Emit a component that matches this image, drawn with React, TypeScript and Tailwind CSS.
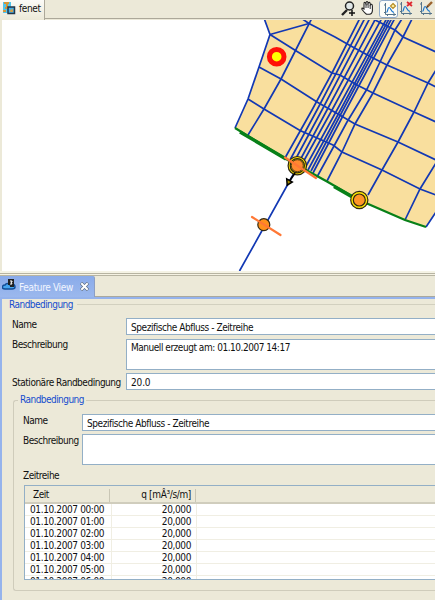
import type { ReactNode } from "react";

const rowLines = [
  "373,19 395,30 403,37 436,52",
  "270,34.5 309,23.5",
  "301,18 309,23.5 335,37 350,45.5 373,58 387,65 428,83 436,87",
  "270,34.5 295.5,50.5 332,73 340,75 357,85 373,93 414,112 436,122",
  "259,67 281,79 317,102 338,114 355,124 398,142 436,160",
  "248,99 264,109 300,130.5 333,145 342,152 382,170 420,189 436,195",
];
const columnLines = [
  "312,18 295.5,50.5 281,79 264,109 248,135",
  "436,70 428,83 414,112 398,142 382,170 368,195",
  "436,163 420,189 405,220",
  "412.5,18 403,37 387,65 373,93 355,124 342,152 327,181",
  "402.5,18 395,30 380,62 367,89 347,122 334,146 317,177",
];
const bundle = [
  "360,18 332,73 312,110 285,158",
  "365,18 317,110 290,160",
  "370,18 322,110 294,162",
  "376,18 327,110 298,164",
  "382,18 332,110 301,166",
  "387,18 337,110 305,168",
  "389.5,18 340.5,110 308,170",
  "392,18 343,110 311,171",
  "395,18 346,110 313,173",
];
const times = ["00:00", "01:00", "02:00", "03:00", "04:00", "05:00", "06:00"];

function FlowMap() {
  return (
    <svg className="ml-[2px] block h-[251px] w-[433px] bg-white" viewBox="2 20 433 251">
      <polygon points="264,19 270,34.5 259,67 248,99 235,128 286,158 327,181 359,200 405,220 426,227 436,213 436,19" fill="#f9df9e" />
      <g fill="none" stroke="#1238b4" strokeWidth="1.7">
        <polyline points="264,18 270,34.5 259,67 248,99 235,128" />
        {[...rowLines, ...columnLines].map((p) => <polyline key={p} points={p} />)}
        {bundle.map((p) => <polyline key={p} points={p} />)}
        <path d="M426 227l10-15M298 166L239.5 271" />
      </g>
      <g fill="none" stroke="#088018">
        <path d="M235 128L286 159L327 181.5L359 200L405 220L426 227" strokeWidth="2.3" />
        <path d="M240 132L286 159M334 186.5L355 198.5" strokeWidth="3.4" />
      </g>
      <circle cx="276.7" cy="56.7" r="7.3" fill="#ffff00" stroke="#ff1008" strokeWidth="5" />
      <g strokeWidth="1.2" stroke="#302810">
        <circle cx="297.3" cy="165.7" r="9.2" fill="#ffe800" />
        <circle cx="297.3" cy="165.7" r="7.1" fill="#ffe000" />
        <circle cx="297.3" cy="165.7" r="6" fill="#ff8a30" strokeWidth="0.8" />
        <circle cx="359.3" cy="200" r="8.6" fill="#ffe800" />
        <circle cx="359.3" cy="200" r="6" fill="#ff9528" />
        <circle cx="263.8" cy="224.7" r="6" fill="#ff901c" />
      </g>
      <path d="M285 157.5L316 178M252 217L280.5 235" stroke="#ff7836" strokeWidth="2.2" strokeLinecap="round" />
      <path d="M295 173L289.5 181" stroke="#000" strokeWidth="1.7" />
      <path d="M286.7 178.8L292.3 182L287.2 185.2Z" fill="#a58c00" stroke="#000" strokeWidth="1.5" />
    </svg>
  );
}

function ChartIcon({ children }: { children: ReactNode }) {
  return (
    <svg className="h-[14px] w-[14px] shrink-0" viewBox="0 0 14 14" fill="none">
      <path d="M2.5 1v11.5H13M1 3h2M1 10.5h2M4.5 12v2M11 11v3" stroke="#55748b" strokeWidth="1" />
      <path d="M3.5 10.5C5 10 4.5 5.5 6 5.5C7.8 5.5 7.5 9.5 11 10.5" stroke="#1976cf" strokeWidth="1.2" />
      {children}
    </svg>
  );
}

function Label({ className, children }: { className: string; children: ReactNode }) {
  return <span className={`block shrink-0 whitespace-nowrap ${className}`}>{children}</span>;
}

export default function App() {
  return (
    <main className="h-[600px] w-[435px] overflow-hidden bg-[#ece9d8] text-[10px] leading-[12px] tracking-[-0.48px] text-[#101010] [font-family:'DejaVu_Sans_Condensed','DejaVu_Sans',sans-serif] [font-stretch:condensed]">
      <header className="flex h-[20px]">
        <div className="flex h-[20px] w-[45px] shrink-0 items-start border-r border-[#aca899] bg-gradient-to-b from-[#fcfbf7] to-[#ece9d8] pl-[3px] pt-[2px]">
          <svg className="h-[13px] w-[13px] shrink-0" viewBox="0 0 13 13">
            <path d="M0 0h8v11H0z" fill="#50c4ed" />
            <path d="M1 1h5M4 2v4M0 9h3M2 6h2" stroke="#d39638" strokeWidth="2" />
            <path d="M5 5h6.5v6.5H5z" fill="#4aaee2" stroke="#223649" strokeWidth="1.5" />
            <path d="M7 9h3M9 7v3" stroke="#dda03c" strokeWidth="1.3" />
          </svg>
          <span className="ml-[3px] mt-px tracking-[-0.35px]">fenet</span>
        </div>
        <div className="flex h-[19px] grow border-b border-[#aca899] pl-[296px] pt-px">
          <svg className="h-[15px] w-[15px] shrink-0" viewBox="0 0 15 15">
            <path d="M6 9L1 14" stroke="#222" strokeWidth="2.4" />
            <circle cx="8.5" cy="5" r="4" fill="#e1e8e8" stroke="#222" strokeWidth="1.5" />
            <path d="M8 12h6M11 9v6" stroke="#111" strokeWidth="1.5" />
          </svg>
          <svg className="ml-[5px] h-[14px] w-[13px] shrink-0" viewBox="0 0 13 14">
            <path d="M3 8V3Q3-0.5 5 3V1.5Q6-0.5 7 1.5V2.5Q8.5 0 9.3 3V4Q11 2 11.4 5V10Q11 13 8.5 13.3H5.5Q3.7 12 1 8.5Q0.3 6 3 8Z" fill="#fff" stroke="#252525" strokeWidth="1.1" />
            <path d="M5 3v4M7.1 2.5V7M9.2 4v4" stroke="#333" />
          </svg>
          <div className="-mt-px ml-[5px] h-[18px] w-[19px] shrink-0 rounded-[3px] border border-[#91abc9] bg-[#fcfcf8] pl-[3px] pt-px">
            <ChartIcon><path d="M10 1.5L12.5 4L10 6.5L7.5 4Z" fill="#fff1a4" stroke="#b58c28" strokeWidth="1.2" /></ChartIcon>
          </div>
          <div className="ml-px"><ChartIcon><path d="M8 1l5 4M13 1L8 5" stroke="#dd2630" strokeWidth="1.8" /></ChartIcon></div>
          <div className="ml-[6px]"><ChartIcon><path d="M13 1L8 6" stroke="#9b632e" strokeWidth="2.4" /><path d="M9 5L7.5 7" stroke="#333" /></ChartIcon></div>
        </div>
      </header>
      <FlowMap />
      <div className="h-[2px] bg-[#f5f3e5]" />
      <div className="h-[3px] border-y border-[#b7b4a2] bg-[#f5f2e3]" />
      <div className="flex h-[21px]">
        <div className="flex h-[21px] w-[95px] shrink-0 items-start rounded-tr-[2px] border-r border-[#8c9fc4] bg-gradient-to-b from-[#8aabea] to-[#9bb8ed] pl-[2px] pt-[4px]">
          <svg className="-mt-px h-[13px] w-[14px]" viewBox="0 0 14 13">
            <path d="M3 10C-1 10 0 6 3 6Q5 3 8 6Q13 4 13 8Q13 10 10 10Z" fill="#46a5ef" stroke="#124d98" strokeWidth="1.5" />
            <path d="M6 0h6v8H8V6H6z" fill="#222" />
            <path d="M8 2h2v1H9l1 2H8" stroke="#fff" fill="none" />
          </svg>
          <span className="ml-[3px] mt-[2px] whitespace-nowrap tracking-[-0.35px] text-[#f1f5ff]">Feature View</span>
          <svg className="ml-[7px] mt-[2px] h-[9px] w-[9px] shrink-0" viewBox="0 0 9 9">
            <path d="M1 1l7 7M8 1L1 8" stroke="#596779" strokeWidth="3.3" />
            <path d="M1.3 1.3l6.4 6.4M7.7 1.3L1.3 7.7" stroke="#fff" strokeWidth="2" />
          </svg>
        </div>
        <div className="grow border-b border-[#aaa99d]" />
      </div>
      <section className="h-[303px] border-l-[2px] border-t-2 border-[#95b3ec]">
        <div className="flex h-[12px] items-start pl-[7px]">
          <Label className="w-[68px] tracking-[-0.54px] text-[#154dce]">Randbedingung</Label>
          <div className="mt-[5px] h-px grow bg-[#d2d0bf]" />
        </div>
        <div className="mt-[7px] flex h-[17px] pl-[10px]">
          <Label className="w-[114px] pt-px">Name</Label>
          <div className="h-[17px] grow border border-r-0 border-[#93afc6] bg-white pl-[4px] pt-[3px] tracking-[-0.44px]">Spezifische Abfluss - Zeitreihe</div>
        </div>
        <div className="mt-[3px] flex h-[32px] pl-[10px]">
          <Label className="w-[114px] pt-px">Beschreibung</Label>
          <div className="mt-px h-[31px] grow border border-r-0 border-[#93afc6] bg-white pl-[4px] pt-[2px] tracking-[-0.47px]">Manuell erzeugt am: 01.10.2007 14:17</div>
        </div>
        <div className="mt-[3px] flex h-[17px] pl-[10px]">
          <Label className="w-[114px] pt-[4px]">Stationäre Randbedingung</Label>
          <div className="h-[17px] grow border border-r-0 border-[#93afc6] bg-white pl-[4px] pt-[3px] tracking-[-0.15px]">20.0</div>
        </div>
        <fieldset className="ml-[11px] mt-[4px] h-[197px] rounded-l-[3px] border border-r-0 border-[#cfccbb]">
          <legend className="ml-[4px] h-[12px] px-[2px] tracking-[-0.54px] text-[#154dce]">Randbedingung</legend>
          <div className="mt-[8px] flex h-[17px] pl-[9px]">
            <Label className="w-[59px] pt-px">Name</Label>
            <div className="h-[17px] grow border border-r-0 border-[#93afc6] bg-white pl-[4px] pt-[3px] tracking-[-0.44px]">Spezifische Abfluss - Zeitreihe</div>
          </div>
          <div className="mt-[3px] flex h-[31px] pl-[9px]">
            <Label className="w-[59px] pt-px">Beschreibung</Label>
            <div className="h-[31px] grow border border-r-0 border-[#93afc6] bg-white" />
          </div>
          <Label className="ml-[9px] mt-[5px] h-[15px]">Zeitreihe</Label>
          <div className="ml-[10px] h-[95px] overflow-hidden border border-r-0 border-[#93afc6] bg-white">
            <div className="flex h-[18px] border-b-2 border-[#d0cdbd] bg-[#ece9d8] pt-[3px]">
              <span className="w-[85px] border-r border-[#c9c6b5] pl-[8px]">Zeit</span>
              <span className="w-[86px] border-r border-[#c9c6b5] pr-[4px] text-right tracking-[-0.35px]">q [mÂ³/s/m]</span>
            </div>
            {times.map((time) => (
              <div key={time} className="flex h-[12px] border-b border-[#f0eee3] tracking-[-0.38px]">
                <span className="w-[87px] shrink-0 border-r border-[#f0eee3] pl-[5px] whitespace-nowrap">01.10.2007 {time}</span>
                <span className="w-[85px] border-r border-[#f0eee3] pr-[5px] text-right">20,000</span>
              </div>
            ))}
          </div>
        </fieldset>
      </section>
    </main>
  );
}
